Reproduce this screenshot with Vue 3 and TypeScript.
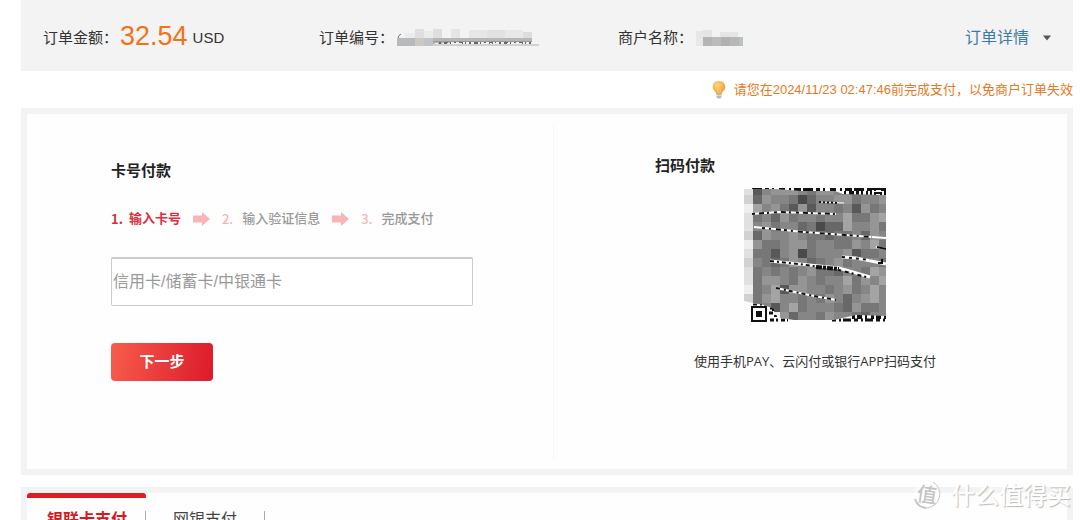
<script setup lang="ts">
import { ref } from 'vue'

interface Step {
  no: number
  label: string
}

interface Block {
  x: number
  y: number
  w: number
  h: number
  fill: string
}

const steps: Step[] = [
  { no: 1, label: '输入卡号' },
  { no: 2, label: '输入验证信息' },
  { no: 3, label: '完成支付' },
]
const tabs: string[] = ['银联卡支付', '网银支付']
const currentStep = ref(1)
const currentTab = ref(0)
const cardNumber = ref('')

// One hex digit per mosaic cell, from black (0) to white (f)
const mosaic: string[] = [
  'e589998799887788',
  'd698874688997889',
  'fa89759588785978',
  'e7869788788a779a',
  'e8978867466a8897',
  'd698898776778698',
  'f9778997887798a7',
  'e775894788895778',
  'd876798678978887',
  'e7878789776887a9',
  'e7998798788a798a',
  'f78a5998878978a8',
  'd79a8878798689a8',
  'e7858a7888769778',
  'ffff968879887688',
]
const shade = (digit: string): string => {
  const v = parseInt(digit, 16) * 15 + 14
  return `rgb(${v}, ${v}, ${v})`
}
const cells: Block[] = mosaic.flatMap((row, r) =>
  [...row].map((d, c) => ({ x: c * 9, y: r * 9 - 2, w: 9, h: 9, fill: shade(d) })),
)

const orderBlocks: Block[] = [
  { x: 8, y: 4, w: 10, h: 8, fill: '#ececec' },
  { x: 18, y: 0, w: 9, h: 12, fill: '#dfdfdf' },
  { x: 27, y: 2, w: 9, h: 10, fill: '#ebebeb' },
  { x: 36, y: 0, w: 9, h: 12, fill: '#dedede' },
  { x: 54, y: 0, w: 9, h: 12, fill: '#e5e5e5' },
  { x: 72, y: 1, w: 18, h: 10, fill: '#e7e7e7' },
  { x: 90, y: 1, w: 18, h: 10, fill: '#e1e1e1' },
  { x: 108, y: 1, w: 18, h: 10, fill: '#e8e8e8' },
  { x: 126, y: 3, w: 9, h: 8, fill: '#dddddd' },
  { x: 0, y: 9, w: 18, h: 8, fill: '#b7babd' },
  { x: 18, y: 9, w: 9, h: 8, fill: '#ccc8c4' },
  { x: 27, y: 9, w: 9, h: 8, fill: '#c0c3c7' },
  { x: 36, y: 9, w: 18, h: 8, fill: '#b5b5b5' },
  { x: 54, y: 9, w: 81, h: 4, fill: '#b6b7b7' },
  { x: 36, y: 15, w: 106, h: 2, fill: '#d1d1d1' },
]
const merchantBlocks: Block[] = [
  { x: 0, y: 2, w: 7, h: 15, fill: '#e7e7e7' },
  { x: 7, y: 1, w: 9, h: 8, fill: '#e4e5e5' },
  { x: 24, y: 3, w: 18, h: 6, fill: '#e5e5e5' },
  { x: 7, y: 8, w: 9, h: 9, fill: '#b4b4b4' },
  { x: 16, y: 8, w: 9, h: 9, fill: '#bcbcbc' },
  { x: 25, y: 8, w: 9, h: 9, fill: '#b1b1b2' },
  { x: 34, y: 8, w: 9, h: 9, fill: '#b9b7b6' },
  { x: 43, y: 8, w: 4, h: 9, fill: '#b8c2c5' },
]
</script>

<template>
  <div class="page" lang="zh-CN">
    <header class="order">
      <div class="field">
        <span>订单金额：</span><strong class="amount">32.54</strong><span>USD</span>
      </div>
      <div class="field">
        <span>订单编号：</span>
        <svg class="mask" width="142" height="18" viewBox="0 0 142 18" aria-hidden="true">
          <path d="M4 5Q1 6 1 10" fill="none" stroke="#777" />
          <rect v-for="(b, i) in orderBlocks" :key="i" :x="b.x" :y="b.y" :width="b.w" :height="b.h" :fill="b.fill" />
          <path d="M36 12.500H135" stroke="#999" stroke-width="1" />
          <path d="M42 14H135" stroke="#666" stroke-width="2" stroke-dasharray="2 3 4 2 1 3" />
          <path d="M38 14.500H134" stroke="#eee" stroke-dasharray="3 4 2 3" />
        </svg>
      </div>
      <div class="field">
        <span>商户名称：</span>
        <svg class="mask" width="47" height="18" viewBox="0 0 47 18" aria-hidden="true">
          <rect v-for="(b, i) in merchantBlocks" :key="i" :x="b.x" :y="b.y" :width="b.w" :height="b.h" :fill="b.fill" />
        </svg>
      </div>
      <a class="detail" href="#">
        订单详情
        <svg width="8" height="6" viewBox="0 0 8 6" aria-hidden="true"><path d="M0 .5H8L4 5.500Z" fill="#555" /></svg>
      </a>
    </header>

    <p class="notice">
      <svg width="14" height="18" viewBox="0 0 14 18" aria-hidden="true">
        <defs>
          <radialGradient id="bulb" cx=".4" cy=".35" r=".65">
            <stop offset="0" stop-color="#ffdc94" />
            <stop offset=".5" stop-color="#fbba55" />
            <stop offset="1" stop-color="#f29a38" />
          </radialGradient>
        </defs>
        <path d="M7 0C3 0 .7 2.800 .7 6C.7 9.500 4 10.500 4.400 13H9.600C10 10.500 13.300 9.500 13.300 6C13.300 2.800 11 0 7 0Z" fill="url(#bulb)" />
        <path d="M6 12.500L5.500 7.500M8 12.500L8.500 7.500" fill="none" stroke="#ffdf9f" stroke-opacity=".6" />
        <path d="M4.500 13H9.500V16L8.500 17.500H5.500L4.500 16Z" fill="#b9b9bd" />
        <path d="M4.500 14.500H9.500" stroke="#d6d6da" />
      </svg>
      <span>请您在2024/11/23 02:47:46前完成支付，以免商户订单失效</span>
    </p>

    <main class="panel methods">
      <section class="card-pay">
        <h2>卡号付款</h2>
        <ol class="steps">
          <li v-for="s in steps" :key="s.no" :class="{ active: s.no === currentStep }">
            <svg v-if="s.no > 1" class="arrow" width="17" height="14" viewBox="0 0 17 14" aria-hidden="true">
              <path d="M0 3.500H9V0L17 7L9 14V10.500H0Z" fill="#f8b5b8" />
            </svg>
            <span class="no">{{ s.no }}.</span><span>{{ s.label }}</span>
          </li>
        </ol>
        <form @submit.prevent>
          <input v-model="cardNumber" type="text" aria-label="卡号" placeholder="信用卡/储蓄卡/中银通卡" />
          <button class="next" type="submit">下一步</button>
        </form>
      </section>

      <section class="scan-pay">
        <h2>扫码付款</h2>
        <svg class="qr" width="142" height="134" viewBox="0 0 142 134" role="img" aria-label="二维码">
          <defs>
            <clipPath id="veil">
              <path d="M0 1L32 1L58 3L91 3L99 6L142 7V128L112 127L90 132H50L37 130L30 126V121L20 117L9 115L0 113Z" />
            </clipPath>
          </defs>
          <g fill="none" stroke="#111">
            <path d="M8 1.500H142" stroke-width="3" stroke-dasharray="10 3 4 3 2 5 6 4 2 3 7 2" />
            <path d="M100 5H124" stroke-width="4" stroke-dasharray="2 3 5 2 3 2" />
            <path d="M127 10V1H141V12M131 8V5H137V8" stroke-width="2" />
            <path d="M108 129H142" stroke-width="4" stroke-dasharray="3 2 5 3 2 4" />
            <path d="M88 132H142" stroke-width="3" stroke-dasharray="4 3 2 2 8 3" />
            <path d="M9 116.500H30" stroke-width="2" stroke-dasharray="4 3 2 2" />
            <path d="M26 120H36M25 125H38M26 132H44" stroke-width="3" stroke-dasharray="4 2 2 3" />
            <path d="M28 122H36M30 128H40" stroke-width="2" stroke-dasharray="3 2" />
            <rect x="8" y="119" width="14" height="14" stroke-width="2" />
          </g>
          <rect x="12" y="123" width="6" height="6" fill="#111" />
          <g clip-path="url(#veil)">
            <rect v-for="(c, i) in cells" :key="i" :x="c.x" :y="c.y" :width="c.w" :height="c.h" :fill="c.fill" />
          </g>
          <g fill="none" stroke="#fff">
            <path d="M8 26L35 24L92 26" stroke-width="2" />
            <path d="M75 14L100 15" />
            <path d="M10 39L60 44L128 49L142 50" stroke-width="2" />
            <path d="M26 73L55 76L95 80L126 89" stroke-width="3" />
            <path d="M98 69L112 70L142 76" stroke-width="3" />
            <path d="M32 100L65 107L92 112" stroke-width="2" />
            <path d="M132 59L142 61" stroke-width="2" />
          </g>
          <g fill="none" stroke="#111" stroke-width="2">
            <path d="M8 26L35 24L92 26" stroke-dasharray="3 4 5 3 2 5" />
            <path d="M75 14L95 15" stroke-dasharray="2 2" />
            <path d="M18 40L60 44L128 49" stroke-dasharray="3 4 2 5 5 3" />
            <path d="M26 73L55 76L75 79" stroke-dasharray="4 3 2 3" />
            <path d="M72 79L95 81" stroke-width="4" stroke-dasharray="6 1 3 1" />
            <path d="M95 82L126 90" stroke-dasharray="2 4 4 3" />
            <path d="M98 69L126 72" stroke-dasharray="3 4" />
            <path d="M32 100L65 107L92 112" stroke-dasharray="4 4 2 3" />
            <path d="M133 59L142 61M134 75H138V71" />
          </g>
        </svg>
        <p>使用手机PAY、云闪付或银行APP扫码支付</p>
      </section>
    </main>

    <nav class="panel tabs" aria-label="支付方式">
      <button v-for="(t, i) in tabs" :key="t" type="button" :class="{ active: i === currentTab }" @click="currentTab = i">
        <span>{{ t }}</span>
      </button>
    </nav>

    <div class="watermark">
      <svg width="32" height="34" viewBox="0 0 32 34" aria-hidden="true">
        <circle cx="16" cy="17" r="13" fill="#fff" fill-opacity=".5" />
        <path d="M4 22A13 13 0 0 0 15 31" fill="none" stroke="#c4c4c4" stroke-width="2" />
        <path d="M15 31A14 14 0 0 0 22 5" fill="none" stroke="#c8c8c8" />
        <text x="16" y="25" text-anchor="middle" transform="rotate(8 16 17)">值</text>
      </svg>
      <span>什么值得买</span>
    </div>
  </div>
</template>

<style>
body {
  margin: 0;
  background: #fff;
}
</style>

<style scoped>
.page {
  position: relative;
  box-sizing: border-box;
  height: 100vh;
  overflow: hidden;
  padding: 0 7px 0 21px;
  color: #333;
  font: 15px/24px "Liberation Sans", "Noto Sans CJK SC", sans-serif;
}
.order {
  display: grid;
  grid-template-columns: 276fr 299fr 347fr 86px;
  align-items: center;
  height: 71px;
  padding: 4px 22px 0;
  box-sizing: border-box;
  background: #f3f3f3;
}
.field {
  display: flex;
  align-items: center;
  white-space: nowrap;
}
.amount {
  margin: 0 5px 4px 2px;
  color: #f37216;
  font-size: 27px;
  font-weight: 400;
}
.mask {
  margin-left: 3px;
}
.detail {
  display: flex;
  align-items: center;
  justify-content: space-between;
  color: #3c7ba9;
  font-size: 16px;
  text-decoration: none;
  white-space: nowrap;
}
.notice {
  display: flex;
  justify-content: flex-end;
  align-items: center;
  gap: 8px;
  height: 37px;
  margin: 0;
  color: #e57a26;
  font-size: 13px;
}
.panel {
  border: 6px solid #f3f3f3;
  background: #fefefe;
}
.methods {
  display: grid;
  grid-template-columns: 527fr 513fr;
  padding: 9px 0;
}
h2 {
  margin: 0;
  color: #222;
  font-size: 15px;
  font-weight: 700;
  line-height: 24px;
}
.card-pay {
  padding: 36px 80px 79px 84px;
  border-right: 1px solid #f7f7f7;
}
.steps {
  display: flex;
  margin: 24px 0 26px;
  padding: 0;
  list-style: none;
  color: #999;
  font-size: 13px;
  font-weight: 500;
}
.steps li {
  display: flex;
  align-items: center;
  white-space: nowrap;
}
.no {
  margin-right: 9px;
  color: #f8b5b8;
  font-family: "Noto Sans CJK SC", sans-serif;
}
.arrow {
  margin: 0 12px;
}
.steps .active,
.steps .active .no {
  color: #d9303f;
  font-weight: 700;
}
.steps .active .no {
  margin-right: 6px;
}
input {
  display: block;
  box-sizing: border-box;
  width: 100%;
  height: 49px;
  padding: 0 1px;
  border: 1px solid #c8cccf;
  border-top: 2px solid #c8cccf;
  border-radius: 2px;
  background: #fff;
  color: #333;
  font: inherit;
  font-size: 16px;
}
input::placeholder {
  color: #999;
  opacity: 1;
}
.next {
  display: block;
  width: 102px;
  height: 38px;
  margin-top: 37px;
  padding: 0;
  border: 0;
  border-radius: 4px;
  background: linear-gradient(100deg, #f75d4c, #dc1a2a);
  color: #fff;
  font: inherit;
  font-weight: 700;
}
.scan-pay {
  padding: 31px 92px 0 101px;
}
.qr {
  display: block;
  margin: 10px auto 27px;
}
.scan-pay p {
  margin: 0;
  font-family: "Open Sans", "Noto Sans CJK SC", sans-serif;
  font-size: 13px;
  text-align: center;
  white-space: nowrap;
}
.tabs {
  display: flex;
  align-items: flex-start;
  height: 60px;
  margin-top: 12px;
}
.tabs button {
  padding: 13px 0 0;
  border: 0;
  border-top: 5px solid transparent;
  background: none;
  color: #444;
  font: inherit;
  font-size: 16px;
  line-height: 18px;
}
.tabs button span {
  display: block;
  padding: 0 27px;
  border-right: 1px solid #aaa;
}
.tabs .active {
  border-radius: 3px;
  border-top-color: #df1b24;
  color: #d61821;
  font-weight: 700;
}
.tabs .active span {
  padding: 0 18px 0 20px;
}
.watermark {
  position: absolute;
  right: 9px;
  bottom: 9px;
  display: flex;
  align-items: center;
  gap: 8px;
  color: #fff;
  font-family: "Noto Sans CJK SC", sans-serif;
  font-size: 24px;
  font-weight: 500;
  line-height: 34px;
  text-shadow: 1px 1px 1px #bbb;
}
.watermark text {
  fill: #c4c4c4;
  font-size: 20px;
  text-shadow: none;
}
</style>
